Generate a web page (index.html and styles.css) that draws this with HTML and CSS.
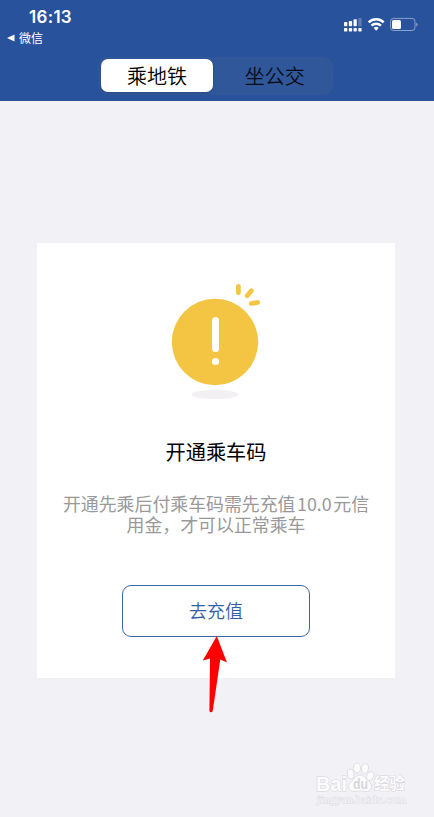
FILE: index.html
```html
<!DOCTYPE html>
<html lang="zh-CN">
<head>
<meta charset="utf-8">
<title>乘车码</title>
<link rel="stylesheet" href="styles.css">
</head>
<body>
<header class="header">
  <div class="status">
    <div class="status-left">
      <div class="time">16:13</div>
      <div class="back"><svg width="8" height="8" viewBox="0 0 8 8"><path d="M0 4 7.5.4v7.2z" fill="#fff"/></svg><span>微信</span></div>
    </div>
    <svg class="status-icons" width="76" height="18" viewBox="342 15 76 18" fill="#fff">
      <rect x="344" y="22" width="3.3" height="4.3" rx=".7"/>
      <rect x="348.8" y="21" width="3.3" height="5.3" rx=".7"/>
      <rect x="353.5" y="19.3" width="3.3" height="7" rx=".7"/>
      <rect x="358.3" y="18" width="3.3" height="8.3" rx=".7" opacity=".25"/>
      <rect x="344" y="28" width="3.3" height="3.5" rx=".7"/>
      <rect x="348.8" y="28" width="3.3" height="3.5" rx=".7"/>
      <rect x="353.5" y="28" width="3.3" height="3.5" rx=".7"/>
      <rect x="358.3" y="28" width="3.3" height="3.5" rx=".7"/>
      <g fill="none" stroke="#fff" stroke-width="2.5">
        <path d="M368.7 22.4a10.6 10.6 0 0 1 15 0"/>
        <path d="M371.5 25.7a6.8 6.8 0 0 1 9.4 0"/>
      </g>
      <path d="M376.2 30.7 373.7 28a3.7 3.7 0 0 1 5 0z"/>
      <rect x="390.5" y="18.4" width="24.5" height="12.1" rx="3" fill="none" stroke="#fff" stroke-opacity=".45"/>
      <rect x="392" y="20" width="9" height="9" rx="1.5"/>
      <path d="M416.3 22.5a2.2 2.2 0 0 1 0 4z" opacity=".5"/>
    </svg>
  </div>
  <nav class="tabs">
    <div class="tab tab-active">乘地铁</div>
    <div class="tab">坐公交</div>
  </nav>
</header>
<main class="card">
  <svg class="notice-icon" width="90" height="118" viewBox="171 283 90 118">
    <ellipse cx="215" cy="394.5" rx="23.5" ry="4.6" fill="#f2f0f2"/>
    <circle cx="215" cy="342" r="43.2" fill="#f4c543"/>
    <g stroke-linecap="round" fill="none">
      <path d="M215.5 320.4v28" stroke="#fff" stroke-width="7"/>
      <path d="M238.4 286.5v6.2M251.3 290.7l-4.1 5M251.3 303.5l6.3-1" stroke="#f4c543" stroke-width="4.8"/>
    </g>
    <circle cx="215.5" cy="361.5" r="3.6" fill="#fff"/>
  </svg>
  <h1 class="title">开通乘车码</h1>
  <p class="desc">开通先乘后付乘车码需先充值<span class="amount">10.0</span>元信<br>用金，才可以正常乘车</p>
  <div class="button">去充值</div>
</main>
<svg class="arrow" width="28" height="78" viewBox="201 635 28 78"><path d="M216.8 636 227 662.5 220.3 659.6 212.7 711.2Q211 713.5 209.4 711.2L210 658.5 202.8 660.5z" fill="#f00"/></svg>
<svg class="watermark" width="96" height="48" viewBox="314 760 96 48">
  <g fill="#fcfcfd" stroke="#d9d8de" stroke-width=".8">
    <ellipse cx="350.8" cy="774" rx="3.3" ry="4.8" transform="rotate(-12 350.8 774)"/>
    <ellipse cx="357" cy="768" rx="3.5" ry="5"/>
    <ellipse cx="365" cy="768.5" rx="3.5" ry="5" transform="rotate(10 365 768.5)"/>
    <ellipse cx="370.2" cy="776" rx="3.4" ry="4.6" transform="rotate(20 370.2 776)"/>
    <path d="M360 775c-4 0-5 4-8 6-6 4-3 11 3 10.500 4-.8 6-.8 10 0 7 1 9-6 3.500-10.500-3-2-4.500-6-8.500-6z"/>
  </g>
  <g class="wm-text">
    <text x="316" y="791" font-size="20" textLength="31" lengthAdjust="spacingAndGlyphs">Bai</text>
    <text class="wm-du" x="353" y="789" font-size="14" textLength="15" lengthAdjust="spacingAndGlyphs">du</text>
    <text x="374" y="789" font-size="15.500">经验</text>
    <text class="wm-url" x="317" y="803" font-size="10.500" textLength="89" lengthAdjust="spacingAndGlyphs">jingyan.baidu.com</text>
  </g>
</svg>
</body>
</html>
```

FILE: styles.css
```css
* { box-sizing: border-box; }
body {
  margin: 0;
  height: 817px;
  overflow: hidden;
  position: relative;
  background: #f2f1f6;
  font-family: "Noto Sans CJK SC", sans-serif;
  font-weight: 350;
}
.header {
  height: 101px;
  background: #28529c;
}
.status {
  display: flex;
  justify-content: space-between;
  height: 57px;
  padding: 8px 16px 0 7px;
  color: #fff;
}
.time {
  padding-left: 22px;
  font: 600 17px/19px Inter, sans-serif;
  letter-spacing: .3px;
}
.back {
  display: flex;
  align-items: center;
  gap: 4px;
  height: 21px;
  font-size: 12px;
  line-height: 20px;
  font-weight: 400;
}
.status-icons { margin-top: 7px; }
.tabs {
  display: flex;
  width: 235px;
  height: 38px;
  margin-left: 98px;
  padding: 2px 3px 3px;
  border-radius: 9px;
  background: #30579a;
}
.tab {
  width: 50%;
  height: 33px;
  padding-left: 9px;
  text-align: center;
  font-size: 20px;
  line-height: 33px;
  color: #060b15;
}
.tab-active {
  width: 112px;
  padding: 0;
  border-radius: 7px;
  background: #fff;
  color: #000;
  box-shadow: 0 1px 3px rgba(0, 0, 0, .15);
}
.card {
  display: flex;
  flex-direction: column;
  align-items: center;
  width: 358px;
  height: 435px;
  margin: 142px 0 0 37px;
  padding-top: 40px;
  background: #fff;
}
.title {
  margin: 36px 0 0;
  font-size: 20.2px;
  line-height: 30px;
  font-weight: 400;
  color: #000;
}
.desc {
  margin: 26px 0 0;
  font-size: 17.9px;
  line-height: 21px;
  font-weight: 400;
  text-align: center;
  white-space: nowrap;
  color: #999;
}
.amount {
  margin: 0 1.5px;
}
.button {
  width: 188px;
  height: 52px;
  margin-top: 50px;
  border: 1.300px solid #3d66a9;
  border-radius: 9px;
  text-align: center;
  font-size: 18px;
  line-height: 49px;
  color: #3560a6;
}
.arrow {
  position: absolute;
  left: 201px;
  top: 635px;
}
.watermark {
  position: absolute;
  left: 314px;
  top: 760px;
}
.wm-text {
  font-family: "Liberation Sans", "Noto Sans CJK SC", sans-serif;
  font-weight: 700;
  fill: #fcfcfd;
  stroke: #d4d3d9;
  stroke-width: 1px;
  paint-order: stroke;
}
.wm-du { fill: #d6d5db; stroke: none; }
.wm-url {
  font-family: "Liberation Serif", serif;
  font-weight: 400;
  fill: #f7f7fa;
  stroke: #dddce1;
}
```
